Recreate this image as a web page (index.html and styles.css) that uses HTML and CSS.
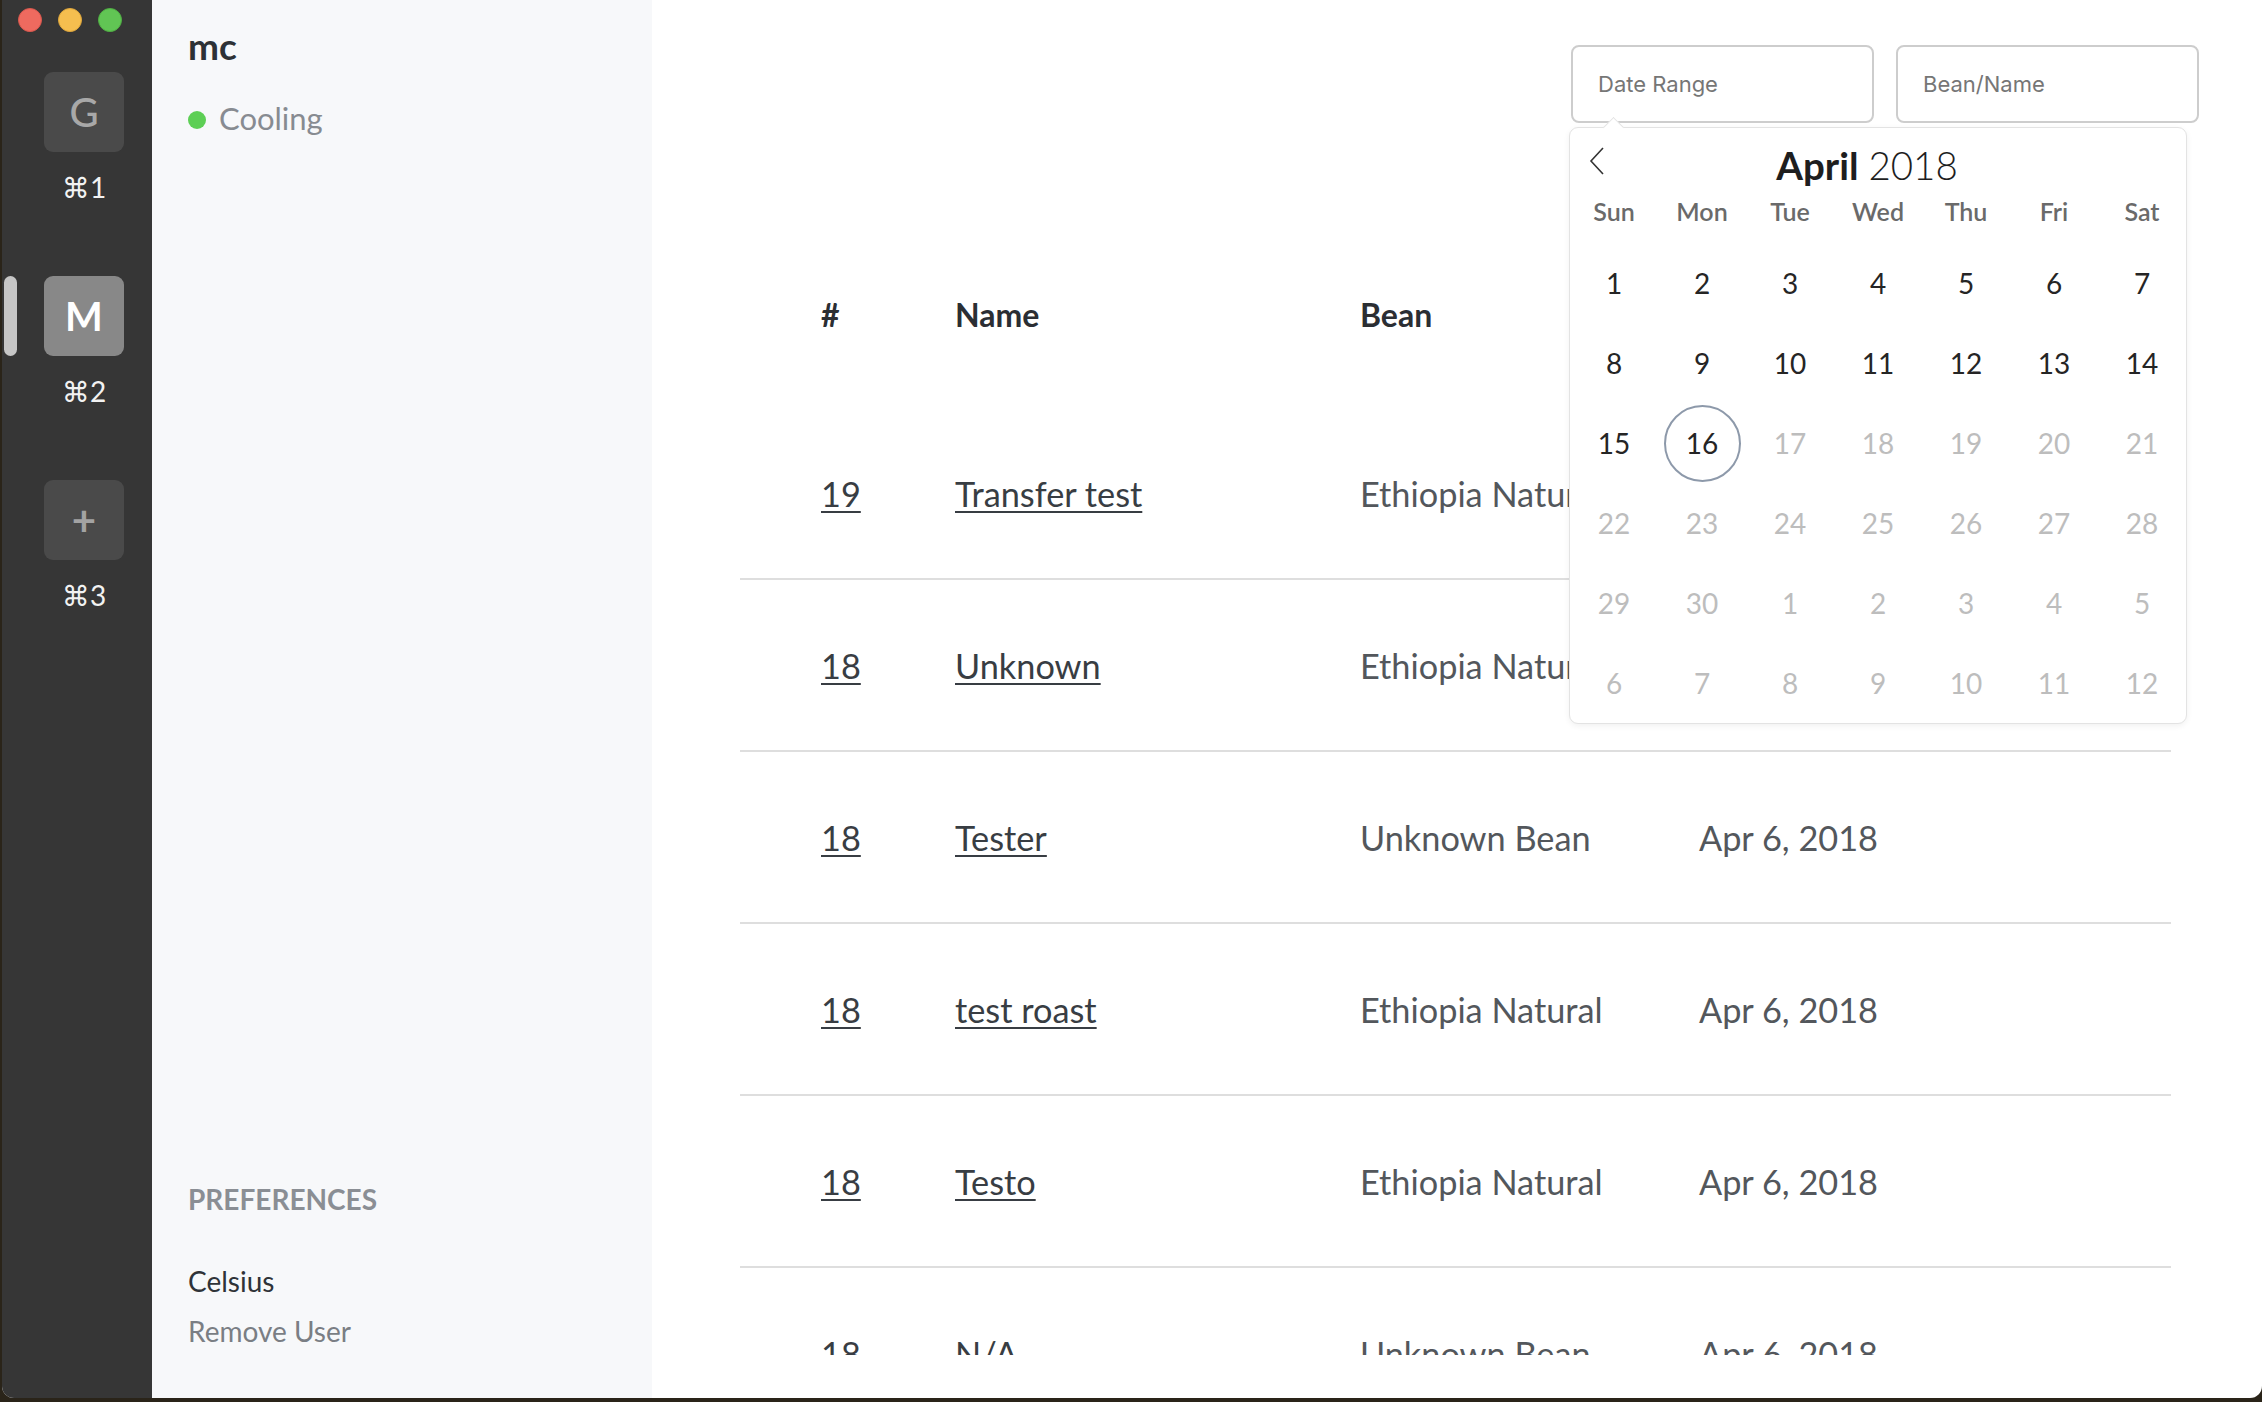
FILE: index.html
```html
<!DOCTYPE html>
<html lang="en">
<head>
<meta charset="utf-8">
<title>Roasts</title>
<link rel="stylesheet" href="styles.css">
</head>
<body>
<div class="window">
  <nav class="rail">
    <div class="lights">
      <span class="light red"></span>
      <span class="light yellow"></span>
      <span class="light green"></span>
    </div>
    <div class="rail-items">
      <div class="rail-item">
        <span class="indicator"></span>
        <div class="rail-entry">
          <div class="rail-btn">G</div>
          <div class="rail-key">⌘1</div>
        </div>
      </div>
      <div class="rail-item">
        <span class="indicator active"></span>
        <div class="rail-entry">
          <div class="rail-btn current">M</div>
          <div class="rail-key">⌘2</div>
        </div>
      </div>
      <div class="rail-item">
        <span class="indicator"></span>
        <div class="rail-entry">
          <div class="rail-btn add">+</div>
          <div class="rail-key">⌘3</div>
        </div>
      </div>
    </div>
  </nav>

  <aside class="panel">
    <div class="panel-title">mc</div>
    <div class="status"><span class="dot"></span>Cooling</div>
    <div class="prefs">
      <div class="prefs-title">PREFERENCES</div>
      <div class="pref">Celsius</div>
      <div class="pref muted">Remove User</div>
    </div>
  </aside>

  <main class="main">
    <div class="filters">
      <div class="field-wrap">
        <div class="field">Date Range</div>
        <div class="popover">
          <div class="cal-head">
            <svg class="chev" width="18" height="30" viewBox="0 0 18 30"><polyline points="15,2 3,15 15,28" fill="none" stroke="#333" stroke-width="1.6"/></svg>
            <div class="cal-title"><b>April</b> <span>2018</span></div>
            <div></div>
          </div>
          <div class="weekdays">
            <span>Sun</span><span>Mon</span><span>Tue</span><span>Wed</span><span>Thu</span><span>Fri</span><span>Sat</span>
          </div>
          <div class="days">
            <span>1</span><span>2</span><span>3</span><span>4</span><span>5</span><span>6</span><span>7</span>
            <span>8</span><span>9</span><span>10</span><span>11</span><span>12</span><span>13</span><span>14</span>
            <span>15</span><span class="today"><i>16</i></span><span class="off">17</span><span class="off">18</span><span class="off">19</span><span class="off">20</span><span class="off">21</span>
            <span class="off">22</span><span class="off">23</span><span class="off">24</span><span class="off">25</span><span class="off">26</span><span class="off">27</span><span class="off">28</span>
            <span class="off">29</span><span class="off">30</span><span class="off">1</span><span class="off">2</span><span class="off">3</span><span class="off">4</span><span class="off">5</span>
            <span class="off">6</span><span class="off">7</span><span class="off">8</span><span class="off">9</span><span class="off">10</span><span class="off">11</span><span class="off">12</span>
          </div>
        </div>
      </div>
      <div class="field">Bean/Name</div>
    </div>

    <div class="table-scroll">
      <div class="trow thead">
        <span>#</span><span>Name</span><span>Bean</span><span>Date</span>
      </div>
      <div class="trow">
        <a href="#">19</a><a href="#">Transfer test</a><span class="cell">Ethiopia Natural</span><span class="cell">Apr 6, 2018</span>
      </div>
      <div class="trow">
        <a href="#">18</a><a href="#">Unknown</a><span class="cell">Ethiopia Natural</span><span class="cell">Apr 6, 2018</span>
      </div>
      <div class="trow">
        <a href="#">18</a><a href="#">Tester</a><span class="cell">Unknown Bean</span><span class="cell">Apr 6, 2018</span>
      </div>
      <div class="trow">
        <a href="#">18</a><a href="#">test roast</a><span class="cell">Ethiopia Natural</span><span class="cell">Apr 6, 2018</span>
      </div>
      <div class="trow">
        <a href="#">18</a><a href="#">Testo</a><span class="cell">Ethiopia Natural</span><span class="cell">Apr 6, 2018</span>
      </div>
      <div class="trow">
        <a href="#">18</a><a href="#">N/A</a><span class="cell">Unknown Bean</span><span class="cell">Apr 6, 2018</span>
      </div>
    </div>
  </main>
</div>
</body>
</html>
```

FILE: styles.css
```css
* { box-sizing: border-box; }

html, body {
  margin: 0;
  padding: 0;
}

body {
  width: 2262px;
  height: 1402px;
  overflow: hidden;
  background: #2a2419;
  font-family: "Lato", "DejaVu Sans", sans-serif;
}

.window {
  margin-left: 2px;
  width: 2260px;
  height: 1398px;
  display: flex;
  border-radius: 0 0 12px 12px;
  overflow: hidden;
  background: #fff;
}

/* ---------- left rail ---------- */
.rail {
  width: 150px;
  flex: none;
  background: #363636;
  padding-top: 8px;
}

.lights {
  display: flex;
  gap: 16px;
  padding-left: 16px;
  height: 24px;
}

.light {
  width: 24px;
  height: 24px;
  border-radius: 50%;
}
.light.red { background: #ee6a5f; border: 1px solid #d9574d; }
.light.yellow { background: #f5be4f; border: 1px solid #dea63b; }
.light.green { background: #61c554; border: 1px solid #4fae43; }

.rail-items {
  margin-top: 40px;
  display: flex;
  flex-direction: column;
  gap: 71px;
}

.rail-item {
  display: flex;
  padding-left: 2px;
}

.indicator {
  width: 13px;
  height: 80px;
  border-radius: 7px;
  flex: none;
}
.indicator.active { background: #c6c6c6; }

.rail-entry {
  margin-left: 27px;
  width: 80px;
}

.rail-btn {
  width: 80px;
  height: 80px;
  border-radius: 9px;
  background: #4a4a4a;
  color: #a8a8a8;
  font-size: 40px;
  font-weight: 500;
  display: flex;
  align-items: center;
  justify-content: center;
}
.rail-btn.current {
  background: #888888;
  color: #ffffff;
  font-weight: 700;
}
.rail-btn.add {
  font-size: 42px;
  color: #a3a3a3;
  font-weight: 700;
}

.rail-key {
  margin-top: 17px;
  height: 36px;
  line-height: 36px;
  text-align: center;
  color: #f2f2f2;
  font-size: 28px;
}

/* ---------- second panel ---------- */
.panel {
  width: 500px;
  flex: none;
  background: #f7f8fa;
  padding: 24px 36px 49px;
  display: flex;
  flex-direction: column;
}

.panel-title {
  font-size: 37px;
  font-weight: 700;
  line-height: 44px;
  color: #2d3136;
}

.status {
  margin-top: 30px;
  display: flex;
  align-items: center;
  font-size: 31px;
  line-height: 40px;
  color: #878b91;
}

.dot {
  width: 18px;
  height: 18px;
  border-radius: 50%;
  background: #5dcf55;
  margin-right: 13px;
  margin-top: 4px;
}

.prefs {
  margin-top: auto;
}

.prefs-title {
  font-size: 28px;
  font-weight: 700;
  line-height: 36px;
  color: #8a8e94;
}

.pref {
  margin-top: 46px;
  font-size: 28px;
  line-height: 36px;
  color: #2f3338;
}
.pref.muted {
  margin-top: 14px;
  color: #7a7e84;
}

/* ---------- main ---------- */
.main {
  flex: 1;
  min-width: 0;
  padding: 45px 0 43px;
  display: flex;
  flex-direction: column;
}

.filters {
  align-self: flex-end;
  margin-right: 63px;
  display: flex;
  gap: 22px;
}

.field-wrap {
  position: relative;
}

.field {
  width: 303px;
  height: 78px;
  border: 2px solid #cdcdcd;
  border-radius: 8px;
  padding-left: 25px;
  display: flex;
  align-items: center;
  font-family: "Inter", "Liberation Sans", sans-serif;
  font-size: 22px;
  color: #767676;
}

.popover {
  position: absolute;
  left: -2px;
  top: 82px;
  width: 618px;
  background: #fff;
  border: 1px solid #e3e3e3;
  border-radius: 9px;
  box-shadow: 0 2px 6px rgba(0, 0, 0, 0.06);
  padding-top: 12px;
  z-index: 5;
}

.popover::before {
  content: "";
  position: absolute;
  left: 36px;
  top: -8px;
  width: 14px;
  height: 14px;
  background: #fff;
  border-left: 1px solid #e3e3e3;
  border-top: 1px solid #e3e3e3;
  transform: rotate(45deg);
}

.cal-head {
  height: 50px;
  display: grid;
  grid-template-columns: 1fr auto 1fr;
  align-items: center;
  padding-left: 18px;
  padding-right: 40px;
}

.chev {
  margin-bottom: 8px;
}

.cal-title {
  font-size: 38.5px;
  color: #1e1e1e;
  line-height: 50px;
  white-space: nowrap;
}
.cal-title b { font-weight: 700; }
.cal-title span { font-weight: 300; }

.weekdays {
  height: 42px;
  display: grid;
  grid-template-columns: repeat(7, 88px);
  align-items: center;
  text-align: center;
  font-size: 25px;
  font-weight: 600;
  color: #6a6a6a;
}

.days {
  margin-top: 11px;
  display: grid;
  grid-template-columns: repeat(7, 88px);
  grid-auto-rows: 80px;
  font-size: 28px;
  color: #252525;
}

.days span {
  display: flex;
  align-items: center;
  justify-content: center;
}

.days .off { color: #bdbdbd; }

.days .today i {
  font-style: normal;
  width: 77px;
  height: 77px;
  border: 2px solid #8d99aa;
  border-radius: 50%;
  display: flex;
  align-items: center;
  justify-content: center;
}

/* ---------- table ---------- */
.table-scroll {
  margin: 97px 91px 0 88px;
  flex: 1;
  min-height: 0;
  overflow: hidden;
}

.trow {
  display: grid;
  grid-template-columns: 134px 405px 339px 1fr;
  align-items: center;
  padding-left: 81px;
  height: 172px;
  border-bottom: 2px solid #dedede;
  font-size: 34.3px;
  color: #53575c;
  white-space: nowrap;
}

.trow.thead {
  height: 188px;
  border-bottom: none;
  font-size: 32px;
  font-weight: 700;
  color: #2b2e33;
}

.trow a {
  justify-self: start;
  color: #383d43;
  text-decoration: underline;
  text-decoration-thickness: 2px;
  text-underline-offset: 4px;
}
```
